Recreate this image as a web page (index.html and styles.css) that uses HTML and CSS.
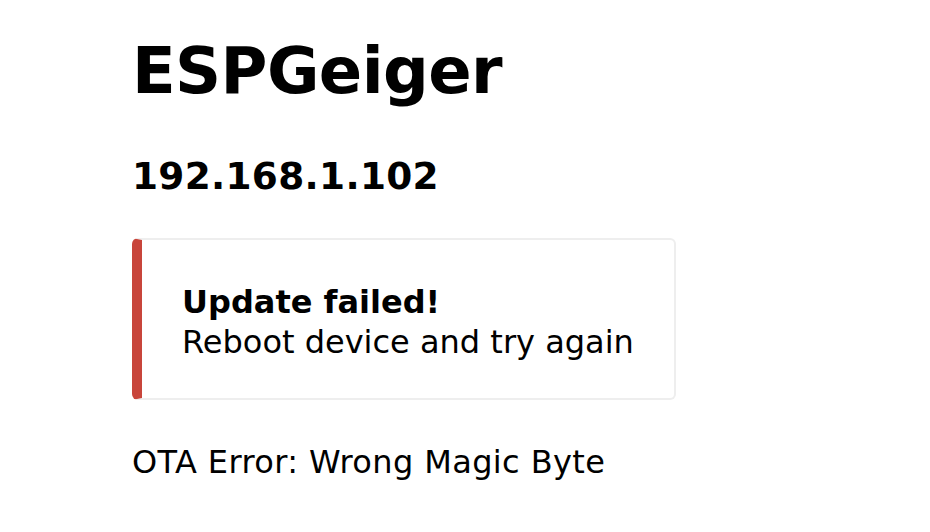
FILE: index.html
```html
<!DOCTYPE html>
<html>
<head>
<meta charset="utf-8">
<title>ESPGeiger</title>
<link rel="stylesheet" href="styles.css">
</head>
<body>
<div class="wrap">
  <h1 class="title">ESPGeiger</h1>
  <h3 class="ip">192.168.1.102</h3>
  <div class="msg msg-danger">
    <strong class="msg-head">Update failed!</strong>
    <span class="msg-body">Reboot device and try again</span>
  </div>
  <div class="detail">OTA Error: Wrong Magic Byte</div>
</div>
</body>
</html>
```

FILE: styles.css
```css
html, body {
  margin: 0;
  padding: 0;
  background: #fff;
}
body {
  font-family: "DejaVu Sans", Verdana, sans-serif;
  font-size: 32px;
  color: #000;
}
.wrap {
  padding: 0 0 0 132px;
  display: flex;
  flex-direction: column;
  align-items: flex-start;
}
.title {
  font-size: 64px;
  font-weight: bold;
  margin: 34px 0 0 0;
  line-height: normal;
  letter-spacing: -0.6px;
}
.ip {
  font-size: 37.44px;
  font-weight: bold;
  margin: 46px 0 0 0;
  line-height: normal;
  letter-spacing: 0.3px;
}
.msg {
  box-sizing: border-box;
  width: 544px;
  height: 162px;
  margin-top: 40px;
  padding: 42px 40px 38px 40px;
  border: 2px solid #eee;
  border-left: 10px solid #777;
  border-radius: 6px;
  display: flex;
  flex-direction: column;
  line-height: 40px;
}
.msg-danger {
  border-left-color: #c8453b;
}
.msg-head {
  font-weight: bold;
}
.detail {
  margin-top: 43px;
  line-height: normal;
  letter-spacing: 0.38px;
}
```
